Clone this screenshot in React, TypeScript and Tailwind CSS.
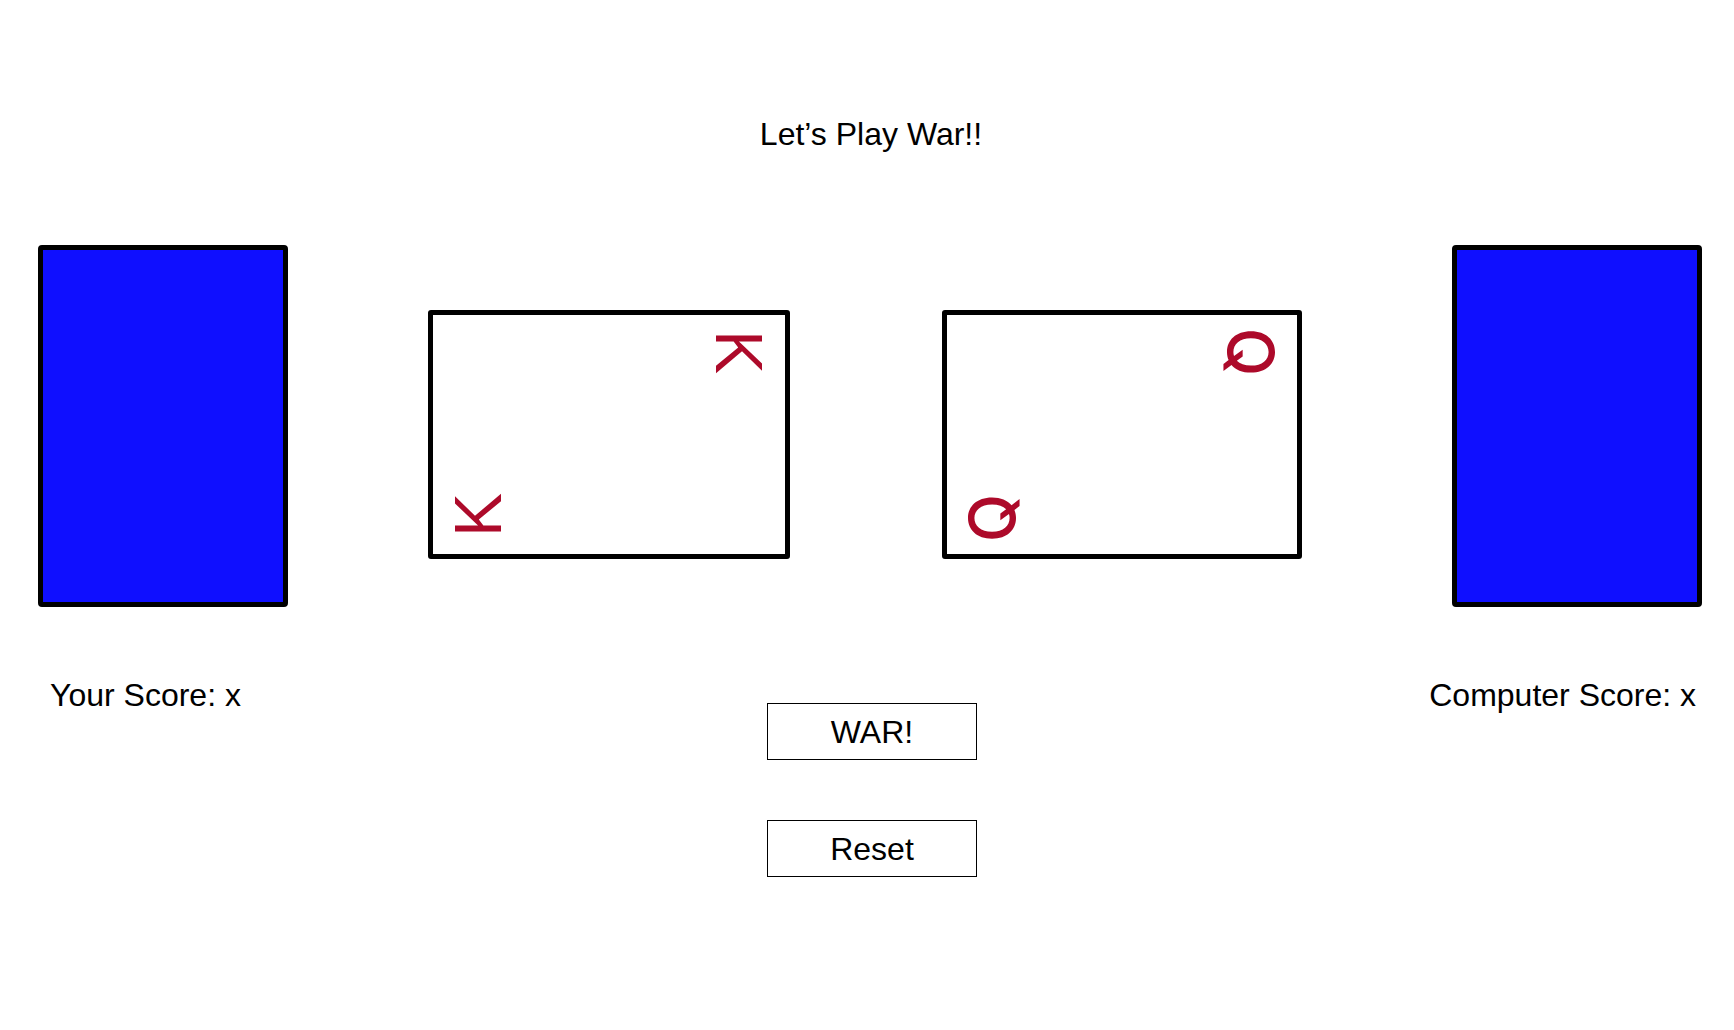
import type { ReactNode } from 'react';

const FONTE = { fontFamily: '"Liberation Sans", Arial, Helvetica, sans-serif' };

function CartaVerso({ className = '' }: { className?: string }) {
  return <div className={`h-[362px] w-[250px] shrink-0 rounded-[4px] border-[5px] border-black bg-[#0f0fff] ${className}`} />;
}

// letra do canto, girada; pos = classes de posicao do centro
function Letra({ children, pos, giro, fonte = '' }: { children: ReactNode; pos: string; giro: string; fonte?: string }) {
  return (
    <span
      className={`absolute ${pos} ${giro} ${fonte} -translate-x-1/2 -translate-y-1/2 leading-none text-[#ad0a2a]`}
    >
      {children}
    </span>
  );
}

function Botao({ children }: { children: ReactNode }) {
  return (
    <button className="flex h-[57px] w-[210px] items-center justify-center border-[1.5px] border-black bg-white text-[32px] leading-none text-black">
      {children}
    </button>
  );
}

export default function App() {
  return (
    <div className="min-h-screen w-full bg-white text-black" style={FONTE}>
      <h1 className="pl-[8px] pt-[116px] text-center text-[32px] font-normal leading-[36px]">Let’s Play War!!</h1>

      <div className="mt-[93px] flex items-start">
        <CartaVerso className="ml-[38px]" />

        <div className="relative ml-[140px] mt-[65px] h-[249px] w-[362px] shrink-0 rounded-[3px] border-[5px] border-black bg-white">
          <Letra pos="left-[306px] top-[37px]" giro="rotate-90" fonte="text-[66px]">K</Letra>
          <Letra pos="left-[45px] top-[200px]" giro="-rotate-90" fonte="text-[66px]">K</Letra>
        </div>

        <div className="relative ml-[152px] mt-[65px] h-[249px] w-[360px] shrink-0 rounded-[3px] border-[5px] border-black bg-white">
          <Letra pos="left-[303px] top-[37px]" giro="rotate-90" fonte="font-['Inter'] font-medium text-[63px]">Q</Letra>
          <Letra pos="left-[45px] top-[203px]" giro="-rotate-90" fonte="font-['Inter'] font-medium text-[63px]">Q</Letra>
        </div>

        <CartaVerso className="ml-[150px]" />
      </div>

      <div className="mt-[70px] grid grid-cols-[1fr_auto_1fr] items-start">
        <p className="pl-[50px] text-[32px] leading-[36px]">Your Score: x</p>

        <div className="ml-[10px] mt-[26px] flex flex-col gap-[60px]">
          <Botao>WAR!</Botao>
          <Botao>Reset</Botao>
        </div>

        <p className="pr-[38px] text-right text-[32px] leading-[36px]">Computer Score: x</p>
      </div>
    </div>
  );
}
